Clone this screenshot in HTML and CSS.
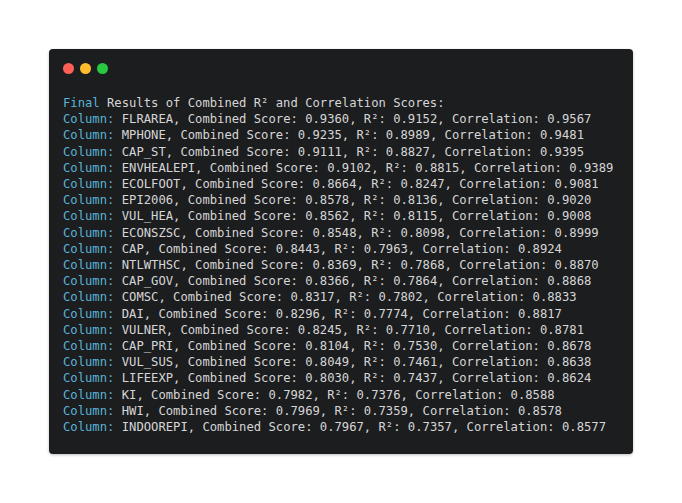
FILE: index.html
```html
<!DOCTYPE html>
<html>
<head>
<meta charset="utf-8">
<link rel="stylesheet" href="styles.css">
</head>
<body>
<div class="stage">
  <div class="window">
    <div class="dots">
      <span class="dot red"></span>
      <span class="dot yellow"></span>
      <span class="dot green"></span>
    </div>
    <pre class="code"><span class="k">Final</span> Results of Combined R² and Correlation Scores:
<span class="k">Column:</span> FLRAREA, Combined Score: 0.9360, R²: 0.9152, Correlation: 0.9567
<span class="k">Column:</span> MPHONE, Combined Score: 0.9235, R²: 0.8989, Correlation: 0.9481
<span class="k">Column:</span> CAP_ST, Combined Score: 0.9111, R²: 0.8827, Correlation: 0.9395
<span class="k">Column:</span> ENVHEALEPI, Combined Score: 0.9102, R²: 0.8815, Correlation: 0.9389
<span class="k">Column:</span> ECOLFOOT, Combined Score: 0.8664, R²: 0.8247, Correlation: 0.9081
<span class="k">Column:</span> EPI2006, Combined Score: 0.8578, R²: 0.8136, Correlation: 0.9020
<span class="k">Column:</span> VUL_HEA, Combined Score: 0.8562, R²: 0.8115, Correlation: 0.9008
<span class="k">Column:</span> ECONSZSC, Combined Score: 0.8548, R²: 0.8098, Correlation: 0.8999
<span class="k">Column:</span> CAP, Combined Score: 0.8443, R²: 0.7963, Correlation: 0.8924
<span class="k">Column:</span> NTLWTHSC, Combined Score: 0.8369, R²: 0.7868, Correlation: 0.8870
<span class="k">Column:</span> CAP_GOV, Combined Score: 0.8366, R²: 0.7864, Correlation: 0.8868
<span class="k">Column:</span> COMSC, Combined Score: 0.8317, R²: 0.7802, Correlation: 0.8833
<span class="k">Column:</span> DAI, Combined Score: 0.8296, R²: 0.7774, Correlation: 0.8817
<span class="k">Column:</span> VULNER, Combined Score: 0.8245, R²: 0.7710, Correlation: 0.8781
<span class="k">Column:</span> CAP_PRI, Combined Score: 0.8104, R²: 0.7530, Correlation: 0.8678
<span class="k">Column:</span> VUL_SUS, Combined Score: 0.8049, R²: 0.7461, Correlation: 0.8638
<span class="k">Column:</span> LIFEEXP, Combined Score: 0.8030, R²: 0.7437, Correlation: 0.8624
<span class="k">Column:</span> KI, Combined Score: 0.7982, R²: 0.7376, Correlation: 0.8588
<span class="k">Column:</span> HWI, Combined Score: 0.7969, R²: 0.7359, Correlation: 0.8578
<span class="k">Column:</span> INDOOREPI, Combined Score: 0.7967, R²: 0.7357, Correlation: 0.8577</pre>
  </div>
</div>
</body>
</html>
```
FILE: styles.css
```css
html, body {
  margin: 0;
  padding: 0;
  background: #ffffff;
}
.stage {
  width: 682px;
  height: 503px;
  display: flex;
  align-items: center;
  justify-content: center;
}
.window {
  width: 584px;
  height: 405px;
  box-sizing: border-box;
  background: #1c1d1f;
  border-radius: 4px;
  box-shadow: 0 1px 3px rgba(0,0,0,0.25);
  padding: 14px 14px 0 14px;
}
.dots {
  display: flex;
  gap: 6px;
  padding-left: 0;
}
.dot {
  width: 11px;
  height: 11px;
  border-radius: 50%;
  display: block;
}
.red { background: #ff5f57; }
.yellow { background: #febc2e; }
.green { background: #28c840; }
.code {
  margin: 21px 0 0 0;
  font-family: "DejaVu Sans Mono", monospace;
  font-size: 12.2px;
  line-height: 16.2px;
  color: #d6d6d6;
  white-space: pre;
}
.k { color: #5ab4d8; }
```
